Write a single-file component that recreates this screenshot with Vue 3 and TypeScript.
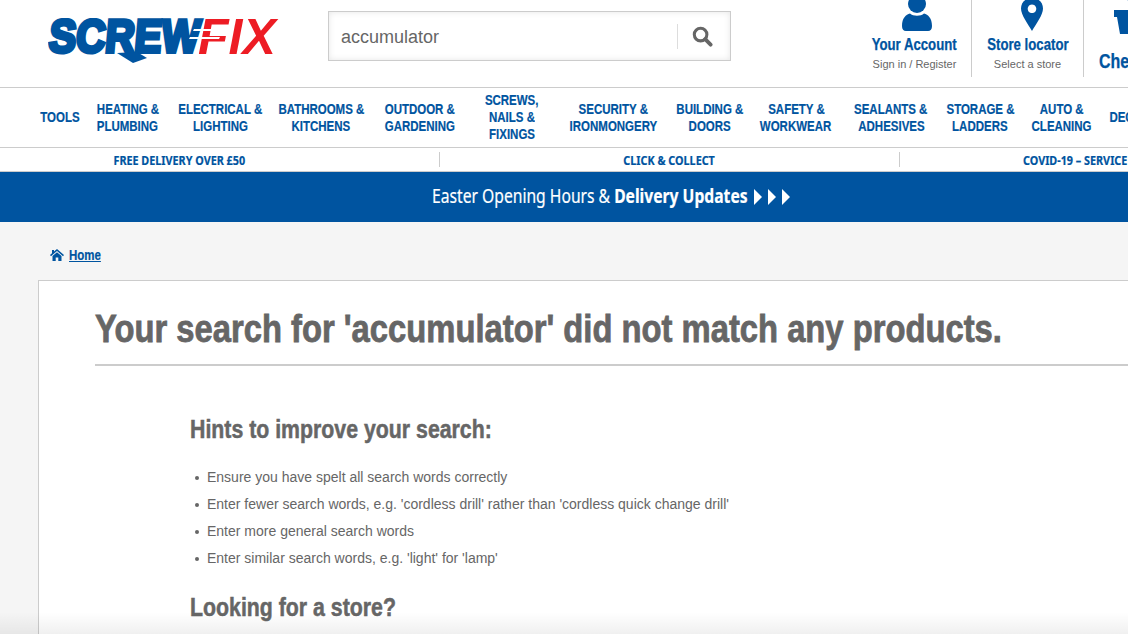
<template>
  <div class="page">
    <header class="top">
      <a class="logo" aria-label="Screwfix">
        <svg width="232" height="48" viewBox="0 0 232 48">
          <text class="logo-blue" transform="translate(0 34) skewX(-5) scale(0.88 1)" x="0" y="0">SCREW</text>
          <text class="logo-red" transform="translate(150 35.500)" x="0" y="0">FIX</text>
          <polygon points="69,35 85,45 99,40 89,34" fill="#0054a0" />
          <g fill="#fff">
            <polygon points="146,11 176,11 175,13 145,13" />
            <polygon points="142,19 172,19 171,21 141,21" />
          </g>
        </svg>
      </a>
      <div class="search">
        <span class="search-text">accumulator</span>
        <span class="search-btn">
          <svg width="21" height="21" viewBox="0 0 22 22">
            <circle cx="9" cy="9" r="6.6" fill="none" stroke="#666" stroke-width="3.2" />
            <path d="M13.8 13.8 L19.5 19.5" stroke="#666" stroke-width="4" stroke-linecap="round" />
          </svg>
        </span>
      </div>
      <div class="tools">
        <a class="tool account">
          <svg class="tool-icon" width="32" height="32" viewBox="0 0 32 32">
            <circle cx="16" cy="4" r="9" fill="#0054a0" />
            <path d="M1 26 C1 18 5 14.500 9 13.500 C12 16.500 20 16.500 23 13.500 C27 14.500 31 18 31 26 C31 29.500 29.500 31 27 31 L5 31 C2.500 31 1 29.500 1 26 Z" fill="#0054a0" />
          </svg>
          <strong>Your Account</strong>
          <small>Sign in / Register</small>
        </a>
        <a class="tool store">
          <svg class="tool-icon" width="24" height="32" viewBox="0 0 24 32">
            <path fill-rule="evenodd" d="M12 -2 C5.500 -2 1 2.500 1 8.500 C1 15 8 24 12 31 C16 24 23 15 23 8.500 C23 2.500 18.500 -2 12 -2 Z M12 4.500 A4.300 4.300 0 1 1 11.990 4.500 Z" fill="#0054a0" />
          </svg>
          <strong>Store locator</strong>
          <small>Select a store</small>
        </a>
        <a class="tool cart">
          <svg class="cart-icon" width="30" height="37" viewBox="0 0 30 37">
            <path d="M0 12 H30 V19 H27 L24 36 H6 L3 19 H0 Z M13 0 H17 L22 12 H17 Z" fill="#0054a0" />
          </svg>
          <strong>Checkout</strong>
        </a>
      </div>
    </header>

    <nav class="cats">
      <a v-for="cat in cats" :key="cat" class="cat">
        <span v-for="line in cat.split('|')" :key="line">{{ line }}</span>
      </a>
    </nav>

    <div class="strip">
      <a class="strip-a"><span>FREE DELIVERY OVER £50</span></a>
      <a class="strip-b"><span>CLICK &amp; COLLECT</span></a>
      <a class="strip-c"><span>COVID-19 – SERVICE UPDATES</span></a>
    </div>

    <a class="banner">
      <span class="banner-text"><span>Easter Opening Hours &amp; <b>Delivery Updates</b></span></span>
      <span class="arrows"><i></i><i></i><i></i></span>
    </a>

    <main class="body">
      <div class="crumb">
        <svg width="14" height="12" viewBox="0 0 14 12">
          <path d="M7 0 L14 6 L13 7.200 L7 2 L1 7.200 L0 6 L2 4.300 V1 H4 V2.600 Z M2.500 7 L7 3.200 L11.500 7 V12 H8.300 V8.500 H5.700 V12 H2.500 Z" fill="#0054a0" />
        </svg>
        <a>Home</a>
      </div>

      <section class="card">
        <h1><span>Your search for 'accumulator' did not match any products.</span></h1>
        <div class="hints">
          <h2><span>Hints to improve your search:</span></h2>
          <ul>
            <li v-for="hint in hints" :key="hint">{{ hint }}</li>
          </ul>
          <h2><span>Looking for a store?</span></h2>
        </div>
      </section>
    </main>
    <div class="fade"></div>
  </div>
</template>

<script setup lang="ts">
const cats: string[] = [
  'TOOLS',
  'HEATING &|PLUMBING',
  'ELECTRICAL &|LIGHTING',
  'BATHROOMS &|KITCHENS',
  'OUTDOOR &|GARDENING',
  'SCREWS,|NAILS &|FIXINGS',
  'SECURITY &|IRONMONGERY',
  'BUILDING &|DOORS',
  'SAFETY &|WORKWEAR',
  'SEALANTS &|ADHESIVES',
  'STORAGE &|LADDERS',
  'AUTO &|CLEANING',
  'DECORATING',
]

const hints: string[] = [
  'Ensure you have spelt all search words correctly',
  "Enter fewer search words, e.g. 'cordless drill' rather than 'cordless quick change drill'",
  'Enter more general search words',
  "Enter similar search words, e.g. 'light' for 'lamp'",
]
</script>

<style>
html, body {
  margin: 0;
  overflow: hidden;
  background: #f5f5f5;
}
</style>

<style scoped>
.page {
  position: relative;
  width: 1128px;
  height: 634px;
  overflow: hidden;
  background: #f5f5f5;
  font-family: "Liberation Sans", Arial, sans-serif;
  color: #666;
}

.top {
  display: flex;
  height: 87px;
  background: #fff;
  border-bottom: 1px solid #ccc;
}
.logo {
  flex: none;
  margin: 18px 0 0 48px;
  width: 232px;
  height: 48px;
}
.logo-blue, .logo-red {
  font-family: "Liberation Sans", sans-serif;
  font-weight: 700;
}
.logo-blue {
  font-size: 46px;
  fill: #0054a0;
  stroke: #0054a0;
  stroke-width: 4px;
}
.logo-red {
  font-size: 50px;
  fill: #ed1c24;
  font-style: italic;
}
.search {
  flex: none;
  display: flex;
  align-items: center;
  justify-content: space-between;
  box-sizing: border-box;
  width: 403px;
  height: 50px;
  margin: 11px 0 0 48px;
  padding-left: 12px;
  border: 1px solid #ccc;
  box-shadow: inset 0 0 6px rgba(0, 0, 0, 0.1);
}
.search-text {
  font-size: 18px;
  padding-top: 2px;
}
.search-btn {
  display: flex;
  align-items: center;
  height: 24px;
  padding: 1px 17px 0 14px;
  border-left: 1px solid #ddd;
}
.tools {
  flex: none;
  display: flex;
  margin-left: 127px;
}
.tool {
  display: flex;
  flex-direction: column;
  align-items: center;
  box-sizing: border-box;
  height: 77px;
  border-right: 1px solid #ccc;
}
.tool strong {
  font-size: 16.500px;
  line-height: 18px;
  margin-top: 3px;
  color: #0054a0;
  white-space: nowrap;
  transform: scaleX(0.8);
  -webkit-text-stroke: 0.25px #0054a0;
}
.tool small {
  font-size: 11px;
  line-height: 13px;
  margin-top: 5px;
  color: #666;
}
.account {
  width: 114px;
}
.account .tool-icon {
  margin-left: 5px;
}
.store {
  width: 112px;
}
.store .tool-icon {
  margin-left: 8px;
}
.cart {
  width: 90px;
  padding-left: 15px;
  align-items: flex-start;
  border-right: 0;
}
.cart-icon {
  margin-left: 15px;
  margin-top: -2px;
}
.cart strong {
  font-size: 20px;
  line-height: 22px;
  margin-top: 15px;
  transform-origin: left center;
}

.cats {
  display: grid;
  grid-template-columns: 55px 81px 105px 96px 102px 82px 120px 74px 98px 92px 86px 78px 94px;
  align-items: center;
  height: 59px;
  padding-left: 32px;
  background: #fff;
  border-bottom: 1px solid #ccc;
}
.cat {
  display: flex;
  flex-direction: column;
  align-items: center;
  font-weight: 700;
  font-size: 14px;
  line-height: 17px;
  color: #0054a0;
  white-space: nowrap;
}
.cat span {
  transform: scaleX(0.82);
  -webkit-text-stroke: 0.2px #0054a0;
}

.strip {
  display: grid;
  grid-template-columns: 440px 460px 300px;
  height: 23px;
  background: #fff;
  border-bottom: 1px solid #ccc;
  font-family: "Noto Sans", sans-serif;
  font-weight: 700;
  font-size: 13px;
  color: #0054a0;
  white-space: nowrap;
}
.strip a {
  display: flex;
  justify-content: center;
  align-items: center;
  height: 15px;
  margin-top: 4px;
  border-right: 1px solid #ccc;
}
.strip span {
  transform: scaleX(0.83);
  -webkit-text-stroke: 0.2px #0054a0;
}
.strip-a {
  padding-right: 80px;
}
.strip .strip-c {
  justify-content: flex-start;
  border-right: 0;
  padding-left: 123px;
}
.strip-c span {
  transform-origin: left center;
}

.banner {
  display: flex;
  align-items: center;
  justify-content: center;
  gap: 5px;
  height: 50px;
  padding-left: 94px;
  background: #0054a0;
  color: #fff;
  font-family: "Noto Sans", sans-serif;
  font-size: 20px;
}
.banner-text {
  width: 317px;
  margin-bottom: 3px;
  white-space: nowrap;
}
.banner-text > span {
  display: inline-block;
  transform: scaleX(0.783);
  transform-origin: left center;
  -webkit-text-stroke: 0.2px #fff;
}
.arrows {
  display: flex;
  gap: 6px;
  margin-bottom: 1px;
}
.arrows i {
  width: 0;
  height: 0;
  border-top: 8px solid transparent;
  border-bottom: 8px solid transparent;
  border-left: 8px solid #fff;
}

.body {
  padding-top: 26px;
}
.crumb {
  display: flex;
  align-items: center;
  gap: 5px;
  height: 14px;
  margin: 0 0 18px 50px;
  font-weight: 700;
  font-size: 14px;
  color: #0054a0;
}
.crumb a {
  text-decoration: underline;
  transform: scaleX(0.82);
  transform-origin: left center;
  -webkit-text-stroke: 0.2px #0054a0;
}

.card {
  box-sizing: border-box;
  width: 1150px;
  height: 400px;
  margin-left: 38px;
  padding: 24px 0 0 56px;
  background: #fff;
  border: 1px solid #ccc;
}
h1 {
  margin: 0;
  height: 59px;
  border-bottom: 2px solid #ccc;
  font-weight: 700;
  font-size: 39px;
  line-height: 48px;
  color: #666;
  white-space: nowrap;
}
h1 span, h2 span {
  display: inline-block;
  transform-origin: left center;
}
h1 span {
  transform: scaleX(0.84);
  -webkit-text-stroke: 0.8px #666;
}
.hints {
  padding: 48px 0 0 95px;
}
h2 {
  margin: 0;
  font-weight: 700;
  font-size: 25px;
  line-height: 30px;
  color: #666;
}
h2 span {
  transform: scaleX(0.852);
  -webkit-text-stroke: 0.5px #666;
}
ul {
  margin: 20px 0;
  padding: 0 0 0 17px;
  list-style: none;
  font-size: 14px;
  line-height: 27px;
}
li {
  position: relative;
}
li::before {
  content: "";
  position: absolute;
  left: -12px;
  top: 12px;
  width: 4px;
  height: 4px;
  border-radius: 50%;
  background: #666;
}

.fade {
  position: absolute;
  left: 0;
  right: 0;
  bottom: 0;
  height: 22px;
  background: linear-gradient(to bottom, rgba(0, 0, 0, 0), rgba(0, 0, 0, 0.06));
}
</style>
